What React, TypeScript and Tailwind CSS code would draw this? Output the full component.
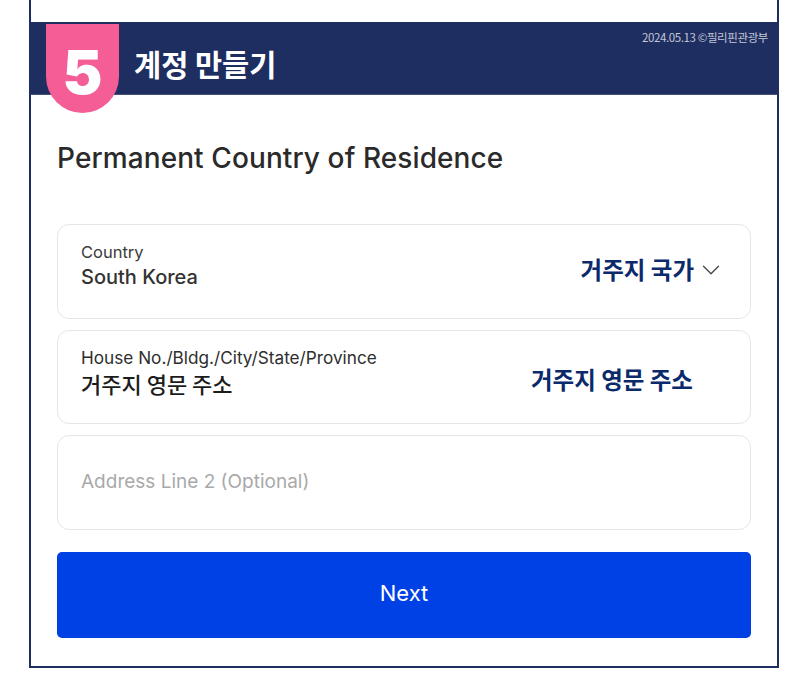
import { ChevronDown } from 'lucide-react'

const KR = "font-['Noto_Sans_CJK_KR',sans-serif]"

function Card({ children }: { children: React.ReactNode }) {
  return (
    <div className="relative flex h-[94.6px] rounded-[12px] border border-[#e6e6e6] bg-white pl-[23px] pr-[24px]">
      {children}
    </div>
  )
}

export default function App() {
  return (
    <div className="h-[696px] w-[790px] bg-white font-['Inter',sans-serif]">
      <div className="ml-[29px] h-[668px] w-[750px] border-x-2 border-b-2 border-[#1f2e61] pt-[22px]">
        <header className="relative flex h-[73px] items-center border-b border-[#47507c] bg-[#1f2e61]">
          <div className="absolute left-[15px] top-[2px] flex h-[89px] w-[73px] items-start justify-center rounded-b-[37px] bg-[#f55d96] pt-[16px] text-[60px] leading-[64px] font-black text-white">
            5
          </div>
          <h1 className={`${KR} ml-[103px] mt-[10px] text-[29.5px] font-bold text-white`}>계정 만들기</h1>
          <span className={`${KR} absolute right-[9px] top-[7px] text-[11.5px] tracking-[-0.4px] text-[#c3c7d6]`}>
            2024.05.13 ©필리핀관광부
          </span>
        </header>

        <main className="px-[26px]">
          <h2 className="mt-[45px] text-[28px] leading-[36px] font-medium tracking-[0.1px] text-[#2a2a2a]">
            Permanent Country of Residence
          </h2>

          <div className="mt-[48px] flex flex-col gap-[11px]">
            <Card>
              <div className="pt-[17px]">
                <div className="text-[16.5px] leading-[20px] text-[#3b3b3b]">Country</div>
                <div className="mt-[2px] text-[20px] leading-[26px] font-medium text-[#333333]">South Korea</div>
              </div>
              <div className="ml-auto flex items-center pb-[3px]">
                <span className={`${KR} text-[23.5px] font-bold text-[#0b2a6b]`}>거주지 국가</span>
                <ChevronDown className="ml-[2px] h-[30px] w-[30px] text-[#444444]" strokeWidth={1} />
              </div>
            </Card>
            <Card>
              <div className="pt-[17px]">
                <div className="text-[17.2px] leading-[20px] text-[#2e2e2e]">House No./Bldg./City/State/Province</div>
                <div className={`${KR} text-[22px] leading-[30px] font-medium text-[#1c1c1c]`}>거주지 영문 주소</div>
              </div>
              <span className={`${KR} absolute right-[57px] top-[32px] text-[23.5px] leading-[32px] font-bold text-[#0b2a6b]`}>
                거주지 영문 주소
              </span>
            </Card>
            <Card>
              <div className="flex items-center pb-[1px] text-[19px] text-[#a9a9a9]">Address Line 2 (Optional)</div>
            </Card>
          </div>

          <button className="mt-[22px] h-[86px] w-full rounded-[5px] bg-[#0041e6] pb-[2px] text-[22px] font-normal text-white">
            Next
          </button>
        </main>
      </div>
    </div>
  )
}
